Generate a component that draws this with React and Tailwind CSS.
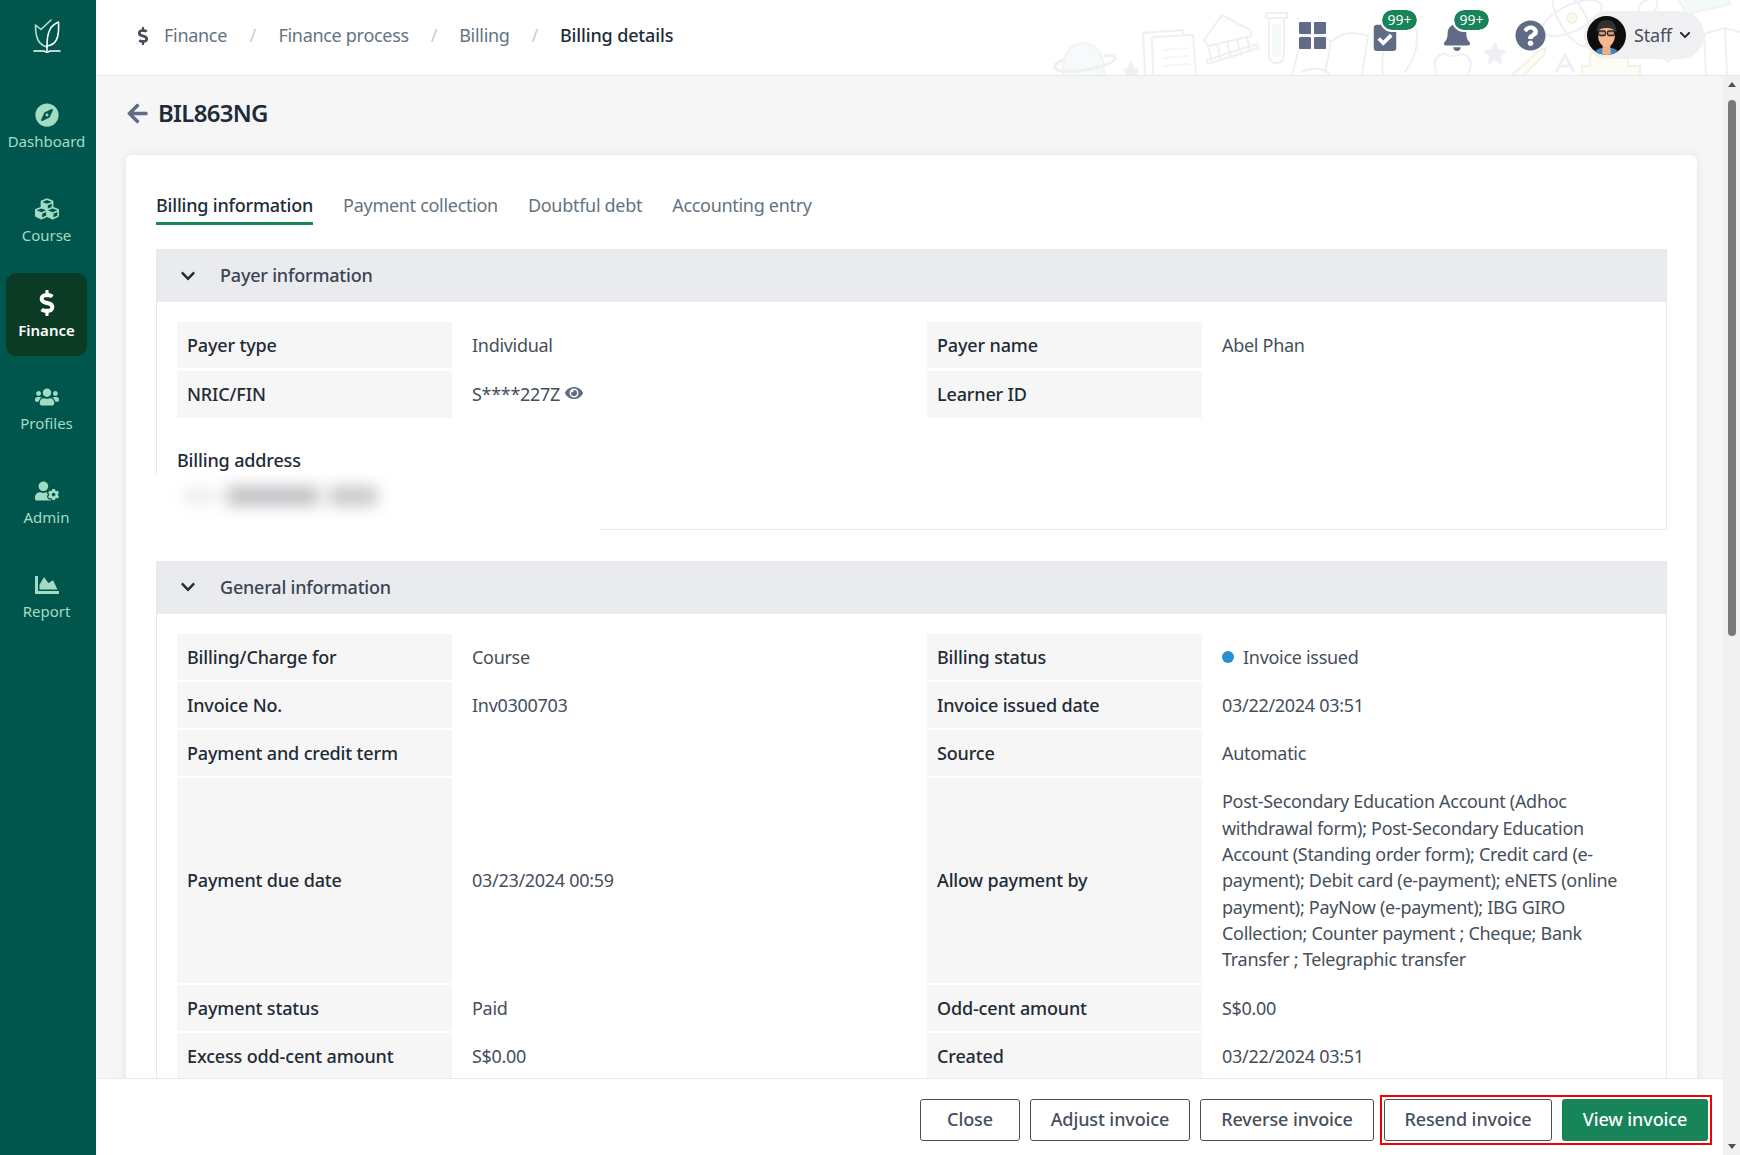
import React from 'react';
import {
  FaArrowLeft,
  FaBell,
  FaChartArea,
  FaChevronDown,
  FaClipboardCheck,
  FaCompass,
  FaCubes,
  FaDollarSign,
  FaEye,
  FaQuestionCircle,
  FaUserCog,
  FaUsers,
} from 'react-icons/fa';

const navItems = [
  { label: 'Dashboard', icon: FaCompass },
  { label: 'Course', icon: FaCubes },
  { label: 'Finance', icon: FaDollarSign, active: true },
  { label: 'Profiles', icon: FaUsers },
  { label: 'Admin', icon: FaUserCog },
  { label: 'Report', icon: FaChartArea },
];

const generalRows = [
  ['Billing/Charge for', 'Course', 'Billing status', 'status'],
  ['Invoice No.', 'Inv0300703', 'Invoice issued date', '03/22/2024 03:51'],
  ['Payment and credit term', '', 'Source', 'Automatic'],
  [
    'Payment due date',
    '03/23/2024 00:59',
    'Allow payment by',
    'Post-Secondary Education Account (Adhoc withdrawal form); Post-Secondary Education Account (Standing order form); Credit card (e-payment); Debit card (e-payment); eNETS (online payment); PayNow (e-payment); IBG GIRO Collection; Counter payment ; Cheque; Bank Transfer ; Telegraphic transfer',
  ],
  ['Payment status', 'Paid', 'Odd-cent amount', 'S$0.00'],
  ['Excess odd-cent amount', 'S$0.00', 'Created', '03/22/2024 03:51'],
];

function Logo() {
  return (
    <svg width="30" height="36" viewBox="0 0 30 36" fill="none" stroke="white" strokeWidth="1.6" strokeLinejoin="round" strokeLinecap="round">
      <path d="M15 30 C7 28 3.5 22 3.5 8 L9 12.5 L19 3" stroke="#b9dcd5" />
      <path d="M15 29 C24 28 27.5 21 26.5 5 C19 8 15 14 15 29 Z" />
      <path d="M15 29 V33.5" />
      <path d="M2 34 H12 L15 35.5 L18 34 H28" />
    </svg>
  );
}

function Sidebar() {
  return (
    <aside className="w-[96px] shrink-0 bg-[#00564c] flex flex-col items-center pr-[3px]">
      <div className="h-[76px] flex items-center justify-center pb-[6px]">
        <Logo />
      </div>
      <nav className="flex flex-col items-center gap-[11px] pt-[9px]">
        {navItems.map(({ label, icon: Icon, active }) => (
          <div
            key={label}
            className={`w-[81px] h-[83px] rounded-[10px] flex flex-col items-center justify-center gap-[4px] text-[15px] ${active ? 'bg-[#0b3a25] text-white font-semibold' : 'text-[#a3dcc4]'}`}
          >
            <Icon size={active ? 26 : 24} />
            <span className="leading-[20px]">{label}</span>
          </div>
        ))}
      </nav>
    </aside>
  );
}

function HeaderArt() {
  return (
    <svg className="absolute right-0 top-0" width="700" height="75" viewBox="1040 0 700 75" fill="none" stroke="#eff0f3" strokeWidth="2" strokeLinejoin="round">
      <path d="M1063 75 V66 Q1066 44 1083 43 Q1101 44 1104 66 V75" fill="#f6fafa" stroke="#f1f3f5" />
      <path d="M1063 60 Q1052 64 1056 69 Q1062 74 1090 69 Q1116 63 1115 58 Q1114 54 1104 56" strokeWidth="3" />
      <path d="M1131 62 L1134 69 L1138 70 L1135 75 H1127 L1124 70 L1128 69 Z" fill="#eff0f3" />
      <path d="M1145 75 L1143 33 L1183 30 L1184 35" />
      <path d="M1153 75 L1152 37 L1193 35 L1196 75" fill="white" />
      <path d="M1162 50 L1188 48 M1162 58 L1189 56 M1163 66 L1190 64" stroke="#f5f6f7" />
      <path d="M1204 40 L1222 15 L1250 30 L1252 36 L1208 46 Z" />
      <path d="M1208 46 L1212 62 M1217 44 L1221 60 M1227 42 L1231 58 M1237 40 L1241 56 M1247 38 L1251 52" />
      <path d="M1207 60 L1257 44 L1258 48 L1208 64 Z" />
      <path d="M1266 13 H1287 V18 H1266 Z" />
      <path d="M1269 18 V54 Q1269 63 1276 63 Q1284 63 1284 54 V18" />
      <path d="M1272 24 H1281 V54 Q1276 60 1272 54 Z" fill="#f4fafa" stroke="none" />
      <path d="M1292 75 L1302 36 Q1320 30 1331 42 Q1345 28 1368 36 L1362 75" />
      <path d="M1331 42 L1325 75" />
      <path d="M1301 72 Q1320 64 1330 75" />
      <path d="M1383 75 Q1381 62 1384 50 M1388 12 Q1405 2 1415 24 Q1422 50 1405 72" />
      <path d="M1437 75 Q1430 55 1445 54 Q1453 58 1461 54 Q1476 56 1468 75" />
      <path d="M1495 43 L1498 50 L1505 51 L1500 56 L1501 63 L1495 59 L1489 63 L1490 56 L1485 51 L1492 50 Z" fill="#eff0f3" />
      <path d="M1512 75 L1540 50 L1546 48 L1544 55 L1524 75" fill="#fdfcf5" stroke="#f5f2e4" />
      <path d="M1556 72 L1565 55 L1574 72 M1560 66 H1570" strokeWidth="3" />
      <ellipse cx="1572" cy="18" rx="13" ry="32" transform="rotate(-30 1572 18)" />
      <ellipse cx="1572" cy="18" rx="32" ry="13" transform="rotate(-25 1572 18)" />
      <circle cx="1572" cy="18" r="5" fill="#fbf9ee" stroke="#f3f1e3" />
      <path d="M1582 75 V66 H1590 V54 Q1610 38 1628 54 V66 H1640 V75" fill="#fdfcf5" stroke="#f5f2e4" />
      <path d="M1668 62 L1652 46 Q1648 36 1658 36 Q1664 36 1668 43 Q1672 36 1678 36 Q1688 38 1684 46 Z" />
      <path d="M1640 18 Q1636 2 1648 0 M1656 0 Q1660 8 1652 12" />
      <path d="M1678 0 L1688 14 L1730 4 L1728 0" fill="#f4fafa" stroke="#eef2f3" />
      <path d="M1706 75 L1704 34 L1725 28 L1740 32 M1725 28 L1727 75" />
    </svg>
  );
}

function Avatar() {
  return (
    <svg width="39" height="39" viewBox="0 0 39 39" className="shrink-0">
      <defs>
        <clipPath id="avatar-clip">
          <circle cx="19.5" cy="19.5" r="19.5" />
        </clipPath>
      </defs>
      <g clipPath="url(#avatar-clip)">
        <rect width="39" height="39" fill="#0d0d0d" />
        <path d="M6 39 Q9 32 15 32 H24 Q30 32 33 39 Z" fill="#3e86c4" />
        <path d="M15 39 L16 26 H23 L24 39 Z" fill="#f2ae85" />
        <ellipse cx="19.5" cy="19" rx="8.5" ry="12" fill="#f5b891" />
        <path d="M9.5 17 Q9.5 4 19.5 4 Q29.5 4 29.5 17 Q27 12 19.5 12 Q12 12 9.5 17 Z" fill="#333030" />
        <rect x="11.5" y="15" width="7" height="4.5" rx="1.5" fill="#c99a80" stroke="#2c2320" strokeWidth="1.3" />
        <rect x="20.5" y="15" width="7" height="4.5" rx="1.5" fill="#c99a80" stroke="#2c2320" strokeWidth="1.3" />
      </g>
    </svg>
  );
}

function Badge() {
  return (
    <span className="absolute left-[12px] -top-[11px] h-[20px] w-[35px] text-center rounded-full bg-[#17845a] text-white text-[14px] leading-[20px] outline-2 outline-white">
      99+
    </span>
  );
}

function Header() {
  return (
    <header className="relative h-[76px] shrink-0 bg-white border-b border-[#e8e8e8] flex items-center pl-[38px] pr-[36px] pb-[4px] overflow-hidden">
      <HeaderArt />
      <div className="relative flex items-center text-[18px] tracking-[-0.3px] text-[#637381]">
        <FaDollarSign size={18} className="text-[#454f5b] mr-[12px]" />
        <span>Finance</span>
        <span className="mx-[22.5px] text-[#c4cdd5]">/</span>
        <span>Finance process</span>
        <span className="mx-[22px] text-[#c4cdd5]">/</span>
        <span>Billing</span>
        <span className="mx-[22px] text-[#c4cdd5]">/</span>
        <span className="font-medium tracking-[-0.15px] text-[#212b36]">Billing details</span>
      </div>
      <div className="relative ml-auto flex items-center text-[#616b85]">
        <div className="grid grid-cols-2 gap-[3px] mr-[44px]">
          <div className="w-[12px] h-[12px] rounded-[1px] bg-[#616b85]"></div>
          <div className="w-[12px] h-[12px] rounded-[1px] bg-[#616b85]"></div>
          <div className="w-[12px] h-[12px] rounded-[1px] bg-[#616b85]"></div>
          <div className="w-[12px] h-[12px] rounded-[1px] bg-[#616b85]"></div>
        </div>
        <div className="relative mr-[42px] mt-[1px]">
          <FaClipboardCheck size={30} />
          <Badge />
        </div>
        <div className="relative mr-[43px] mt-[1px]">
          <FaBell size={30} />
          <Badge />
        </div>
        <FaQuestionCircle size={31} className="mr-[38px]" />
        <div className="w-[120px] h-[48px] -mt-[1px] rounded-full bg-[#f0f0f3] flex items-center pl-[3px] text-[18px] tracking-[-0.2px] text-[#454f5b]">
          <Avatar />
          <span className="ml-[8px]">Staff</span>
          <FaChevronDown size={12} className="ml-[7px] text-[#212b36]" />
        </div>
      </div>
    </header>
  );
}

function SectionHeader({ title }) {
  return (
    <div className="h-[53px] bg-[#eaebef] flex items-center pl-[23px] text-[18px] tracking-[-0.2px] font-medium text-[#3a4454]">
      <FaChevronDown size={16} className="text-[#212b36]" />
      <span className="ml-[24px]">{title}</span>
    </div>
  );
}

function Row({ label, children }) {
  return (
    <div className="grid grid-cols-[275px_1fr] items-stretch">
      <div className="bg-[#f6f6f6] flex items-center pl-[10px] py-[10px] font-medium tracking-[-0.15px] text-[#212b36] leading-[26.3px]">{label}</div>
      <div className="flex items-center pl-[20px] py-[10px] tracking-[-0.3px] text-[#454f5b] leading-[26.3px]">{children}</div>
    </div>
  );
}

function Tabs() {
  return (
    <div className="flex gap-[30px] text-[18px] tracking-[-0.3px] text-[#637381]">
      <span className="text-[#212b36] font-medium tracking-[-0.2px] border-b-[3px] border-[#17845a] pb-[3px] leading-[28px]">Billing information</span>
      <span className="leading-[28px]">Payment collection</span>
      <span className="leading-[28px]">Doubtful debt</span>
      <span className="leading-[28px]">Accounting entry</span>
    </div>
  );
}

function Content() {
  return (
    <div className="flex-1 overflow-hidden pt-[21px] pl-[30px] pr-[26px]">
      <div className="flex items-center text-[#212b36]">
        <FaArrowLeft size={23} className="text-[#616b85]" />
        <h1 className="ml-[9px] text-[24px] tracking-[-0.7px] font-semibold leading-[32px]">BIL863NG</h1>
      </div>
      <div className="mt-[26px] bg-white rounded-[6px] shadow-[0_0_10px_rgba(0,0,0,0.08)] px-[30px] pt-[36px] pb-[30px] text-[18px]">
        <Tabs />
        <section className="mt-[24px] relative border-x border-b border-[#e8e8e8]">
          <SectionHeader title="Payer information" />
          <div className="px-[20px] pt-[20px] pb-[23px]">
            <div className="grid grid-cols-[750px_1fr] gap-y-[3px]">
              <Row label="Payer type">Individual</Row>
              <Row label="Payer name">Abel Phan</Row>
              <Row label="NRIC/FIN">
                S****227Z
                <FaEye size={18} className="ml-[5px] mb-[2px] text-[#616b85]" />
              </Row>
              <Row label="Learner ID"></Row>
            </div>
            <div className="mt-[29px] font-medium tracking-[-0.15px] text-[#212b36] leading-[26px]">Billing address</div>
            <div className="h-[27px] mt-[6px]"></div>
          </div>
          <div className="absolute -left-[2px] top-[225px] w-[445px] h-[57px] bg-white/95 flex items-center pb-[14px] overflow-hidden">
            <div className="ml-[28px] w-[32px] h-[10px] bg-[#e4e4e4] blur-[8px]"></div>
            <div className="ml-[12px] w-[92px] h-[18px] bg-[#b8babd] blur-[8px]"></div>
            <div className="ml-[10px] w-[48px] h-[18px] bg-[#c0c2c4] blur-[8px]"></div>
          </div>
        </section>
        <section className="mt-[31px] border-x border-[#e8e8e8]">
          <SectionHeader title="General information" />
          <div className="px-[20px] pt-[20px]">
            <div className="grid grid-cols-[750px_1fr] gap-y-[2px]">
              {generalRows.map(([l1, v1, l2, v2]) => (
                <React.Fragment key={l1}>
                  <Row label={l1}>{v1}</Row>
                  <Row label={l2}>
                    {v2 === 'status' ? (
                      <span className="flex items-center">
                        <span className="w-[12px] h-[12px] rounded-full bg-[#2a8fd0] mr-[9px]"></span>
                        Invoice issued
                      </span>
                    ) : (
                      <span className="w-[405px]">{v2}</span>
                    )}
                  </Row>
                </React.Fragment>
              ))}
            </div>
          </div>
        </section>
      </div>
    </div>
  );
}

function Footer() {
  const btn = 'h-[42px] rounded-[3px] border border-[#454f5b] bg-white text-[#454f5b] font-medium tracking-[-0.1px] text-[18px] flex items-center justify-center';
  return (
    <footer className="relative h-[77px] shrink-0 bg-white border-t border-[#e8e8e8] flex items-center justify-end gap-[10px] pr-[11px] pt-[5px]">
      <button className={`${btn} w-[100px]`}>Close</button>
      <button className={`${btn} w-[160px]`}>Adjust invoice</button>
      <button className={`${btn} w-[174px]`}>Reverse invoice</button>
      <div className="flex items-center gap-[10px] p-[2px] border-2 border-[#f00000] -my-[4px] -ml-[4px]">
        <button className={`${btn} w-[168px]`}>Resend invoice</button>
        <button className="h-[42px] w-[146px] rounded-[3px] bg-[#17845a] text-white font-medium tracking-[-0.1px] text-[18px] flex items-center justify-center">View invoice</button>
      </div>
    </footer>
  );
}

function Scrollbar() {
  return (
    <div className="w-[17px] shrink-0 bg-[#f1f1f1] flex flex-col items-center">
      <div className="h-[17px] flex items-center justify-center">
        <div className="w-0 h-0 border-x-[4px] border-x-transparent border-b-[5px] border-b-[#505050]"></div>
      </div>
      <div className="mt-[7px] w-[8px] h-[536px] rounded-full bg-[#787878]"></div>
      <div className="mt-auto h-[17px] flex items-center justify-center">
        <div className="w-0 h-0 border-x-[4px] border-x-transparent border-t-[5px] border-t-[#505050]"></div>
      </div>
    </div>
  );
}

export default function App() {
  return (
    <div className="h-[1155px] w-[1740px] flex overflow-hidden bg-[#f6f6f6] font-['Noto_Sans',sans-serif]">
      <Sidebar />
      <main className="flex-1 min-w-0 flex flex-col">
        <Header />
        <div className="flex-1 min-h-0 flex">
          <div className="flex-1 min-w-0 flex flex-col">
            <Content />
            <Footer />
          </div>
          <Scrollbar />
        </div>
      </main>
    </div>
  );
}
